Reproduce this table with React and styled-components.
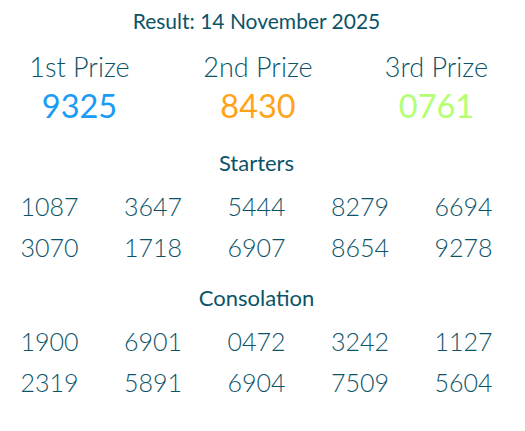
import React from "react";
import styled, { createGlobalStyle } from "styled-components";

const Global = createGlobalStyle`
  html, body { margin: 0; padding: 0; background: #ffffff; }
  body { font-family: Lato, "Open Sans", sans-serif; overflow: hidden; }
`;

const Page = styled.div`
  width: 513px;
  padding-top: 9px;
  color: #0b5468;
`;

const Title = styled.h2`
  margin: 0;
  font-size: 21px;
  line-height: 24px;
  font-weight: 400;
  text-align: center;
`;

const PrizeGrid = styled.div`
  display: grid;
  grid-template-columns: repeat(3, 178.5px);
  justify-content: center;
  margin-top: 17.6px;
  margin-left: 3px;
`;

const Prize = styled.div`
  display: flex;
  flex-direction: column;
  align-items: center;
`;

const PrizeLabel = styled.div`
  font-size: 27px;
  line-height: 32px;
  font-weight: 300;
`;

const PrizeNumber = styled.div`
  margin-top: 4.6px;
  font-size: 32.5px;
  line-height: 38px;
  font-weight: 400;
  color: ${(p) => p.$color};
`;

const Section = styled.section`
  margin-top: ${(p) => p.$top}px;
`;

const SectionTitle = styled.h3`
  margin: 0 0 10.3px;
  font-size: 22px;
  line-height: 26px;
  font-weight: 400;
  text-align: center;
`;

const NumberGrid = styled.div`
  display: grid;
  grid-template-columns: repeat(5, 103.5px);
  justify-content: center;
`;

const Num = styled.div`
  font-size: 25px;
  line-height: 41px;
  font-weight: 300;
  text-align: center;
`;

const prizes = [
  { label: "1st Prize", num: "9325", color: "#1a9bf5" },
  { label: "2nd Prize", num: "8430", color: "#ffa31a" },
  { label: "3rd Prize", num: "0761", color: "#b3ff73" },
];

const starters = ["1087", "3647", "5444", "8279", "6694", "3070", "1718", "6907", "8654", "9278"];
const consolation = ["1900", "6901", "0472", "3242", "1127", "2319", "5891", "6904", "7509", "5604"];

export default function App() {
  return (
    <Page>
      <Global />
      <Title>Result: 14 November 2025</Title>
      <PrizeGrid>
        {prizes.map((p) => (
          <Prize key={p.label}>
            <PrizeLabel>{p.label}</PrizeLabel>
            <PrizeNumber $color={p.color}>{p.num}</PrizeNumber>
          </Prize>
        ))}
      </PrizeGrid>
      <Section $top={24.9}>
        <SectionTitle>Starters</SectionTitle>
        <NumberGrid>
          {starters.map((n, i) => (
            <Num key={i}>{n}</Num>
          ))}
        </NumberGrid>
      </Section>
      <Section $top={16.7}>
        <SectionTitle>Consolation</SectionTitle>
        <NumberGrid>
          {consolation.map((n, i) => (
            <Num key={i}>{n}</Num>
          ))}
        </NumberGrid>
      </Section>
    </Page>
  );
}
